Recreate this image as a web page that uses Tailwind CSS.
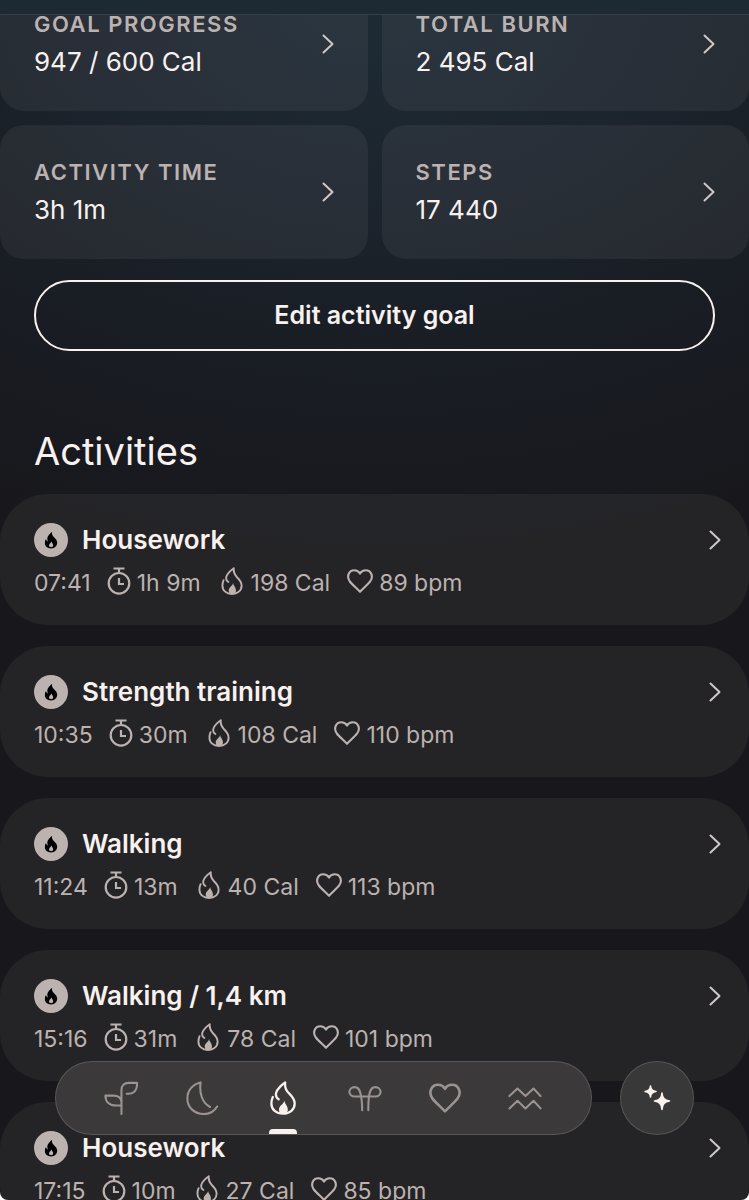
<!DOCTYPE html>
<html lang="en">
<head>
  <meta charset="UTF-8" />
  <meta name="viewport" content="width=device-width, initial-scale=1.0"/>
  <title>Activity</title>
  <script src="https://cdn.jsdelivr.net/npm/@tailwindcss/browser@4"></script>
</head>
<body class="bg-white font-[Inter,'Liberation_Sans',sans-serif] text-[#f8f1ee]">

  <!-- Icon sprite -->
  <svg class="hidden" aria-hidden="true">
    <symbol id="chevron" viewBox="0 0 12 20">
      <path d="M1.500 1.500 10.500 10l-9 8.500" fill="none" stroke="currentColor" stroke-width="2" stroke-linecap="round" stroke-linejoin="round"/>
    </symbol>
    <symbol id="timer" viewBox="0 0 24 28">
      <g fill="none" stroke="currentColor" stroke-width="2.200">
        <circle cx="12" cy="16.300" r="10.300"/>
        <path d="M6.500 1.500h11M12 1.500V6M12 11v6h5"/>
      </g>
    </symbol>
    <symbol id="flame" viewBox="0 0 26 34">
      <path d="M8.600 18.300C6.400 16.800 5.600 14.800 6 12.400 6.500 9.500 8.200 7.600 10.200 5.600 11.800 4 13.200 2.800 15.200 1.400c-.7 4.600.6 7.700 3.700 10.800 3.200 3.200 5.800 5.700 5.800 10.200 0 6.200-4.900 10.300-11.700 10.300S1.400 28.600 1.400 22.700c0-2.500.5-4.700 1.400-6.700" fill="none" stroke="currentColor" stroke-width="2.300" stroke-linecap="round" stroke-linejoin="round"/>
      <path d="M14.300 19.500c-.4 3.700-5.300 5-5.300 9 0 1.600.5 2.900 1.300 4.100h5.900c1-1.100 1.600-2.500 1.600-4.200 0-3.700-3-5.400-3.500-8.900z" fill="currentColor"/>
    </symbol>
    <symbol id="flame-solid" viewBox="0 0 16 20">
      <path d="M9.200.5c-.4 2.800.4 4.600 2.600 6.700 1.900 1.900 3.200 3.300 3.200 6 0 3.900-2.900 6.400-7 6.400s-7-2.600-7-6.200c0-1.800.4-3.200 1.200-4.500.3 1.300 1 2.200 2.200 2.800C3.200 7.800 3.900 5.900 6 3.700 7.200 2.500 8.100 1.600 9.200.5z" fill="currentColor"/>
      <path d="M8.400 11.500c-.2 2.200-2.700 2.700-2.700 4.600 0 1.400 1 2.200 2.400 2.200s2.400-.9 2.400-2.300c0-1.900-1.800-2.500-2.100-4.500z" fill="#bcb2af"/>
    </symbol>
    <symbol id="heart" viewBox="0 0 32 30">
      <path d="M16 28.300C11.500 23.600 6.500 19.500 3.500 15.600-1 9.500 2.300 1.800 9 1.800c3 0 5.500 1.400 7 4 1.500-2.600 4-4 7-4 6.700 0 10 7.700 5.500 13.800C25.500 19.500 20.500 23.600 16 28.300z" fill="none" stroke="currentColor" stroke-width="2.600" stroke-linejoin="round"/>
    </symbol>
  </svg>

  <div class="relative h-screen overflow-hidden rounded-b-lg bg-[#18181c] bg-[radial-gradient(ellipse_110%_560px_at_50%_0,#1d2b35,#1c242d_35%,#191d24_65%,#18181c)]">

    <header class="relative z-10 h-[15px] border-b border-white/10 bg-[#1d2a33]"></header>

    <main class="-mt-[38px]">
      <!-- Daily stats -->
      <section class="grid grid-cols-2 gap-[14px] text-[26px] leading-8">
        <a href="#" class="flex items-center justify-between rounded-3xl bg-[#fff4ee]/6 px-[34px] pt-8 pb-[33px]">
          <div>
            <h2 class="mb-[7px] text-[22px] leading-[30px] font-semibold tracking-[0.07em] text-[#bcb2af]">GOAL PROGRESS</h2>
            <p>947 / 600 Cal</p>
          </div>
          <svg class="h-5 w-3 text-[#cfc8c5]"><use href="#chevron"/></svg>
        </a>
        <a href="#" class="flex items-center justify-between rounded-3xl bg-[#fff4ee]/6 px-[34px] pt-8 pb-[33px]">
          <div>
            <h2 class="mb-[7px] text-[22px] leading-[30px] font-semibold tracking-[0.07em] text-[#bcb2af]">TOTAL BURN</h2>
            <p>2 495 Cal</p>
          </div>
          <svg class="h-5 w-3 text-[#cfc8c5]"><use href="#chevron"/></svg>
        </a>
        <a href="#" class="flex items-center justify-between rounded-3xl bg-[#fff4ee]/6 px-[34px] pt-8 pb-[33px]">
          <div>
            <h2 class="mb-[7px] text-[22px] leading-[30px] font-semibold tracking-[0.07em] text-[#bcb2af]">ACTIVITY TIME</h2>
            <p>3h 1m</p>
          </div>
          <svg class="h-5 w-3 text-[#cfc8c5]"><use href="#chevron"/></svg>
        </a>
        <a href="#" class="flex items-center justify-between rounded-3xl bg-[#fff4ee]/6 px-[34px] pt-8 pb-[33px]">
          <div>
            <h2 class="mb-[7px] text-[22px] leading-[30px] font-semibold tracking-[0.07em] text-[#bcb2af]">STEPS</h2>
            <p>17 440</p>
          </div>
          <svg class="h-5 w-3 text-[#cfc8c5]"><use href="#chevron"/></svg>
        </a>
      </section>

      <div class="px-[34px] pt-[21px]">
        <button type="button" class="h-[71px] w-full rounded-full border-2 border-[#f8f1ee] text-[25px] font-semibold">Edit activity goal</button>
      </div>

      <!-- Activities -->
      <h1 class="mt-[76px] px-[34px] text-[38px] leading-12">Activities</h1>

      <ul id="activityList" class="mt-[19px] space-y-[21px]">
        <!-- Populated via JS -->
      </ul>
    </main>

    <!-- Bottom navigation -->
    <div class="absolute inset-x-0 bottom-[65px] flex gap-7 px-[55px]">
      <nav class="flex h-[74px] flex-1 items-center justify-between rounded-full border border-white/15 bg-[#3b3939] pr-[49px] pl-12 text-[#9b9391]">
        <a href="#" aria-label="Readiness">
          <svg class="size-[34px]" viewBox="0 0 36 36" fill="none" stroke="currentColor" stroke-width="2.200" stroke-linecap="round" stroke-linejoin="round"><path d="M18.500 35V9.500C18.500 4.500 21.500 2 26 2h9v1.500C35 9.500 32 13.500 26 13.500h-2M18.500 26H13C6 26 1.500 22 1.500 15.500H10c5 0 8.500 2.500 8.500 7"/></svg>
        </a>
        <a href="#" aria-label="Sleep">
          <svg class="size-[34px]" viewBox="0 0 36 36" fill="none" stroke="currentColor" stroke-width="2.200" stroke-linecap="round" stroke-linejoin="round"><path d="M34 27C31 32 26 35 20 35 10 35 2.500 28 2.500 18.500 2.500 10 8 3.500 16.500 1.500c-1.500 11 1.500 21.500 10 26"/></svg>
        </a>
        <a href="#" aria-label="Activity" class="relative flex h-full w-[34px] items-center justify-center text-[#f8f1ee]">
          <svg class="h-[34px] w-[26px]"><use href="#flame"/></svg>
          <span class="absolute bottom-0 left-[3px] h-[5px] w-7 rounded-t bg-[#f8f1ee]"></span>
        </a>
        <a href="#" aria-label="Resilience">
          <svg class="size-[34px]" viewBox="0 0 36 36" fill="none" stroke="currentColor" stroke-width="2.200" stroke-linecap="round" stroke-linejoin="round"><path d="M15 31c0-7-.5-13-2-18.500C12 8.500 10 6.500 7 6.500s-5.500 2-5.500 5 2.500 5 5.500 5h22c3 0 5.500-2 5.500-5s-2.500-5-5.500-5-5 2-6 6C21.500 18 21.500 24 21.500 31"/></svg>
        </a>
        <a href="#" aria-label="Heart health">
          <svg class="h-[34px] w-8"><use href="#heart"/></svg>
        </a>
        <a href="#" aria-label="Stress">
          <svg class="size-[34px]" viewBox="0 0 36 36" fill="none" stroke="currentColor" stroke-width="2.200" stroke-linecap="round" stroke-linejoin="round"><path d="M1.500 16l8.500-8 8.500 8L27 8l7.500 8M1.500 29l8.500-8 8.500 8L27 21l7.500 8"/></svg>
        </a>
      </nav>
      <button type="button" aria-label="Advisor" class="flex size-[74px] items-center justify-center rounded-full border border-white/15 bg-[#393838]">
        <svg class="size-7" viewBox="0 0 28 28" fill="currentColor"><path d="M7.500 2Q7.800 7 13 7.500 7.800 8 7.500 13 7.200 8 2 7.500 7.200 7 7.500 2zM19 9Q19.300 16.500 26.500 17 19.300 17.500 19 25.500 18.700 17.500 11.500 17 18.700 16.500 19 9z" stroke="currentColor" stroke-width="1.600" stroke-linejoin="round"/></svg>
      </button>
    </div>
  </div>

  <template id="activityRow">
    <li>
      <a href="#" class="flex h-[131px] items-center justify-between rounded-[48px] bg-white/5 pt-0.5 pr-7 pl-[34px]">
        <div>
          <div class="flex items-center gap-[14px]">
            <span class="flex size-[34px] items-center justify-center rounded-full bg-[#bcb2af] text-black">
              <svg class="h-[18px] w-[14px]"><use href="#flame-solid"/></svg>
            </span>
            <h3 data-field="name" class="text-[26px] leading-9 font-semibold"></h3>
          </div>
          <div class="mt-[9px] flex items-center text-[23px] leading-8 text-[#bcb2af]">
            <span data-field="start" class="mr-4"></span>
            <svg class="mr-[6px] mb-1 h-7 w-6"><use href="#timer"/></svg>
            <span data-field="duration" class="mr-5"></span>
            <svg class="mr-2 mb-1 h-7 w-[22px]"><use href="#flame"/></svg>
            <span data-field="burn" class="mr-[17px]"></span>
            <svg class="mr-[6px] mb-1 h-[26px] w-[26px]"><use href="#heart"/></svg>
            <span data-field="pulse"></span>
          </div>
        </div>
        <svg class="mb-[42px] h-5 w-3 text-[#cfc8c5]"><use href="#chevron"/></svg>
      </a>
    </li>
  </template>

  <script>
    const activities = [
      { name: 'Housework', start: '07:41', duration: '1h 9m', burn: '198 Cal', pulse: '89 bpm' },
      { name: 'Strength training', start: '10:35', duration: '30m', burn: '108 Cal', pulse: '110 bpm' },
      { name: 'Walking', start: '11:24', duration: '13m', burn: '40 Cal', pulse: '113 bpm' },
      { name: 'Walking / 1,4 km', start: '15:16', duration: '31m', burn: '78 Cal', pulse: '101 bpm' },
      { name: 'Housework', start: '17:15', duration: '10m', burn: '27 Cal', pulse: '85 bpm' }
    ];

    const list = document.getElementById('activityList');
    const template = document.getElementById('activityRow');

    activities.forEach(activity => {
      const row = template.content.cloneNode(true);
      row.querySelectorAll('[data-field]').forEach(el => {
        el.textContent = activity[el.dataset.field];
      });
      list.appendChild(row);
    });
  </script>
</body>
</html>
